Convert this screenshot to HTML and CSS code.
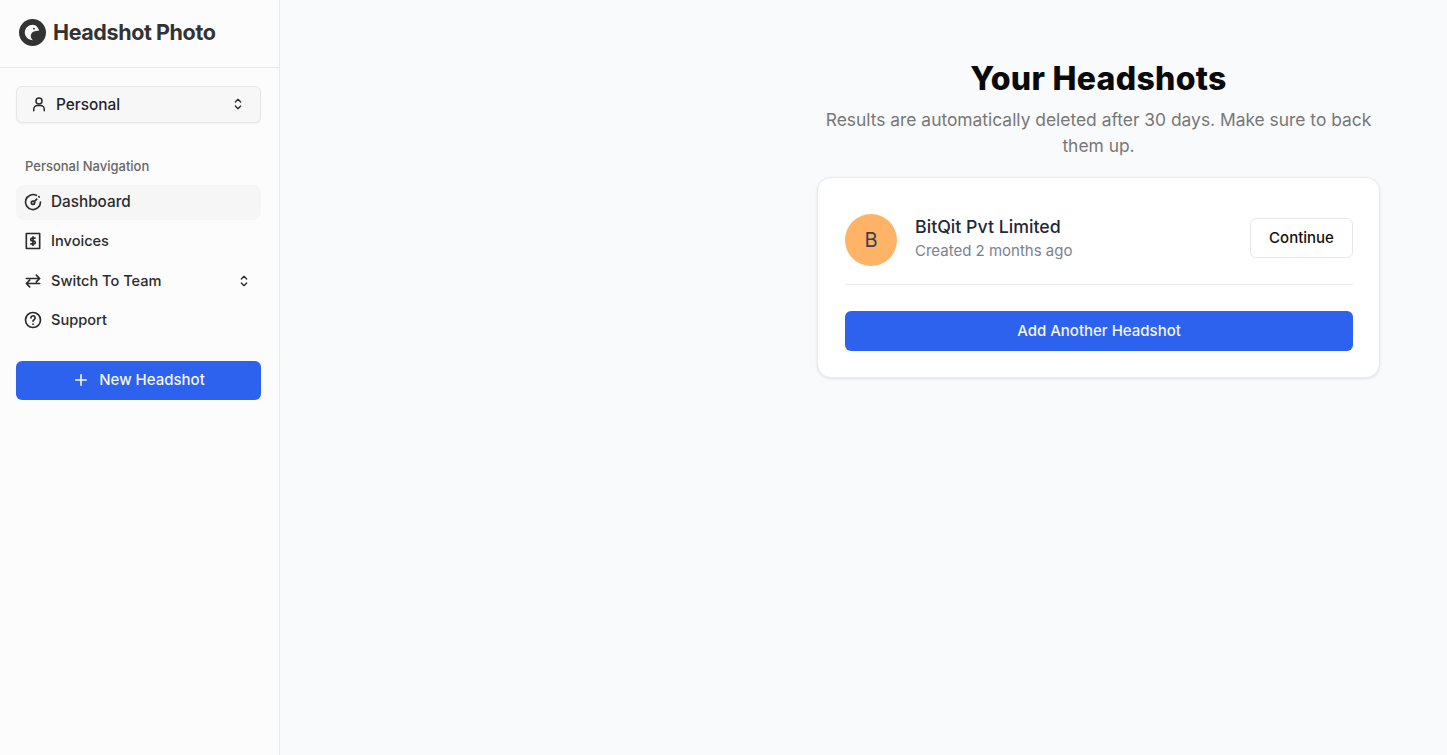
FILE: index.html
```html
<!DOCTYPE html>
<html lang="en">
<head>
	<meta charset="UTF-8">
	<title>Headshot Photo</title>
	<link rel="stylesheet" href="styles.css">
</head>
<body>
<div class="layout">
	<aside class="sidebar">
		<div class="brand">
			<svg class="brandIcon" width="27" height="27" viewBox="0 0 28 28">
				<circle cx="14" cy="14" r="14" fill="#333"/>
				<path d="M14.5 6C10 6 6 9.500 6 14s4 8 8.500 8c-3-2-2.700-6.500-.5-8.200 1.700-1.200 5-1.300 7-1.800C20 9 17.500 6 14.500 6z" fill="#fafafa"/>
				<circle cx="15.500" cy="10" r="1" fill="#333"/>
			</svg>
			<span class="brandName">Headshot Photo</span>
		</div>
		<div class="sideBody">
			<button class="accountSelect">
				<svg class="icon" width="18" height="18" viewBox="0 0 24 24"><circle cx="12" cy="8" r="4"/><path d="M5 21v-2a5 5 0 0 1 5-5h4a5 5 0 0 1 5 5v2"/></svg>
				<span class="accountName">Personal</span>
				<svg class="icon chevrons" width="16" height="16" viewBox="0 0 24 24"><path d="M8 9l4-4 4 4M8 15l4 4 4-4"/></svg>
			</button>
			<div class="navTitle">Personal Navigation</div>
			<nav class="nav">
				<a class="navItem navItem-active">
					<svg class="icon" width="20" height="20" viewBox="0 0 24 24"><path d="M21 12a9 9 0 1 1-5-8"/><circle cx="12" cy="13" r="2"/><path d="M13.500 11.500l3-3"/><path d="M19 5.500l.5.5"/></svg>
					<span class="navLabel navLabel-big">Dashboard</span>
				</a>
				<a class="navItem">
					<svg class="icon" width="20" height="20" viewBox="0 0 24 24"><path d="M4 3h16v18H4z" stroke-dasharray="2 .5"/><path d="M14.500 8.500H11a1.700 1.700 0 0 0 0 3.500h2a1.700 1.700 0 0 1 0 3.500H9.500M12 7v10"/></svg>
					<span class="navLabel">Invoices</span>
				</a>
				<a class="navItem">
					<svg class="icon" width="20" height="20" viewBox="0 0 24 24"><path d="M4 9h16M16 5l4 4-4 4M20 15H4M8 11l-4 4 4 4"/></svg>
					<span class="navLabel">Switch To Team</span>
					<svg class="icon chevrons" width="16" height="16" viewBox="0 0 24 24"><path d="M8 9l4-4 4 4M8 15l4 4 4-4"/></svg>
				</a>
				<a class="navItem">
					<svg class="icon" width="20" height="20" viewBox="0 0 24 24"><circle cx="12" cy="12" r="9"/><path d="M9.500 9.500a2.500 2.500 0 1 1 3.800 2.100c-.8.500-1.300 1-1.300 2"/><path d="M12 17h.01"/></svg>
					<span class="navLabel">Support</span>
				</a>
			</nav>
			<button class="primaryBtn newBtn">
				<svg class="icon icon-white" width="18" height="18" viewBox="0 0 24 24"><path d="M12 5v14M5 12h14"/></svg>
				New Headshot
			</button>
		</div>
	</aside>
	<main class="main">
		<div class="content">
			<h1 class="title">Your Headshots</h1>
			<p class="subtitle">Results are automatically deleted after 30 days. Make sure to back them up.</p>
			<div class="card">
				<div class="row">
					<div class="avatar">B</div>
					<div class="rowText">
						<div class="company">BitQit Pvt Limited</div>
						<div class="created">Created 2 months ago</div>
					</div>
					<button class="continueBtn">Continue</button>
				</div>
				<button class="primaryBtn addBtn">Add Another Headshot</button>
			</div>
		</div>
	</main>
</div>
</body>
</html>
```
FILE: styles.css
```css
* {
	margin: 0;
	padding: 0;
	box-sizing: border-box;
}

body {
	font-family: Inter, "Liberation Sans", sans-serif;
	background-color: #f9fafc;
	color: #1f2430;
}

button {
	font-family: inherit;
	cursor: pointer;
}

.layout {
	display: flex;
	height: 755px;
	overflow: hidden;
}

.sidebar {
	width: 280px;
	flex-shrink: 0;
	background-color: #fcfcfc;
	border-right: 1px solid #e9e9e9;
}
.brand {
	height: 68px;
	padding: 0 0 3px 19px;
	display: flex;
	align-items: center;
	gap: 7px;
	border-bottom: 1px solid #e9e9e9;
}
.brandName {
	font-size: 21.5px;
	font-weight: 700;
	letter-spacing: -0.4px;
	color: #333;
}
.sideBody {
	padding: 18px 18px 0 16px;
}

.icon {
	fill: none;
	stroke: #2b2b2b;
	stroke-width: 2;
	stroke-linecap: round;
	stroke-linejoin: round;
	flex-shrink: 0;
}
.icon-white {
	stroke: #fff;
}
.chevrons {
	margin-left: auto;
}

.accountSelect {
	width: 245px;
	height: 37px;
	padding: 0 14px 1px 13px;
	display: flex;
	align-items: center;
	gap: 8px;
	background-color: #f7f7f7;
	border: 1px solid #e6e6e6;
	border-radius: 6px;
	box-shadow: 0 1px 2px rgba(0, 0, 0, 0.05);
}
.accountName {
	font-size: 15.4px;
	font-weight: 500;
	color: #1f2430;
}

.navTitle {
	margin-top: 35px;
	padding-left: 9px;
	font-size: 13px;
	font-weight: 500;
	line-height: 16px;
	color: #666;
}

.nav {
	margin-top: 11px;
}
.navItem {
	width: 245px;
	height: 35.5px;
	padding: 0 9px 2px 7px;
	margin-bottom: 4px;
	display: flex;
	align-items: center;
	gap: 8px;
	border-radius: 8px;
	color: #2b2b2b;
}
.navItem-active {
	height: 35px;
	margin-bottom: 4.5px;
	background-color: #f6f6f6;
}
.navLabel {
	font-size: 14.6px;
	font-weight: 500;
}
.navLabel-big {
	font-size: 15.3px;
}

.primaryBtn {
	display: flex;
	align-items: center;
	justify-content: center;
	padding-bottom: 2px;
	background-color: #2d62ee;
	color: #f4f6ff;
	border: 0;
	border-radius: 6px;
	font-size: 15px;
	font-weight: 500;
}
.newBtn {
	width: 245px;
	height: 39px;
	margin-top: 22px;
	gap: 9px;
}

.main {
	flex: 1;
	display: flex;
	justify-content: flex-end;
	padding: 58px 67px 0 0;
}
.content {
	width: 563px;
	text-align: center;
}
.title {
	font-size: 32px;
	font-weight: 800;
	letter-spacing: 0.3px;
	line-height: 42px;
	color: #0a0a0a;
}
.subtitle {
	margin-top: 7px;
	font-size: 17.4px;
	line-height: 26px;
	color: #777;
}

.card {
	margin-top: 18px;
	padding: 36px 26px 27px 27px;
	height: 201px;
	background-color: #fff;
	border: 1px solid #e9ebee;
	border-radius: 14px;
	box-shadow: 0 1px 3px rgba(0, 0, 0, 0.1);
}
.row {
	display: flex;
	align-items: center;
	padding-bottom: 18px;
	border-bottom: 1px solid #e9ebee;
	text-align: left;
}
.avatar {
	width: 52px;
	height: 52px;
	border-radius: 50%;
	background-color: #ffb367;
	color: #3a4150;
	font-size: 20px;
	line-height: 52px;
	text-align: center;
}
.rowText {
	flex: 1;
	margin: 0 0 4px 18px;
}
.company {
	font-size: 17.75px;
	font-weight: 500;
	line-height: 26px;
	color: #1f2937;
}
.created {
	font-size: 15px;
	line-height: 22px;
	color: #7a8290;
}
.continueBtn {
	width: 103px;
	height: 40px;
	margin-bottom: 4px;
	padding-bottom: 2px;
	background-color: #fff;
	border: 1px solid #e6e7ea;
	border-radius: 6px;
	font-size: 15px;
	font-weight: 500;
	color: #111;
}
.addBtn {
	width: 100%;
	height: 40px;
	margin-top: 26px;
}
```
